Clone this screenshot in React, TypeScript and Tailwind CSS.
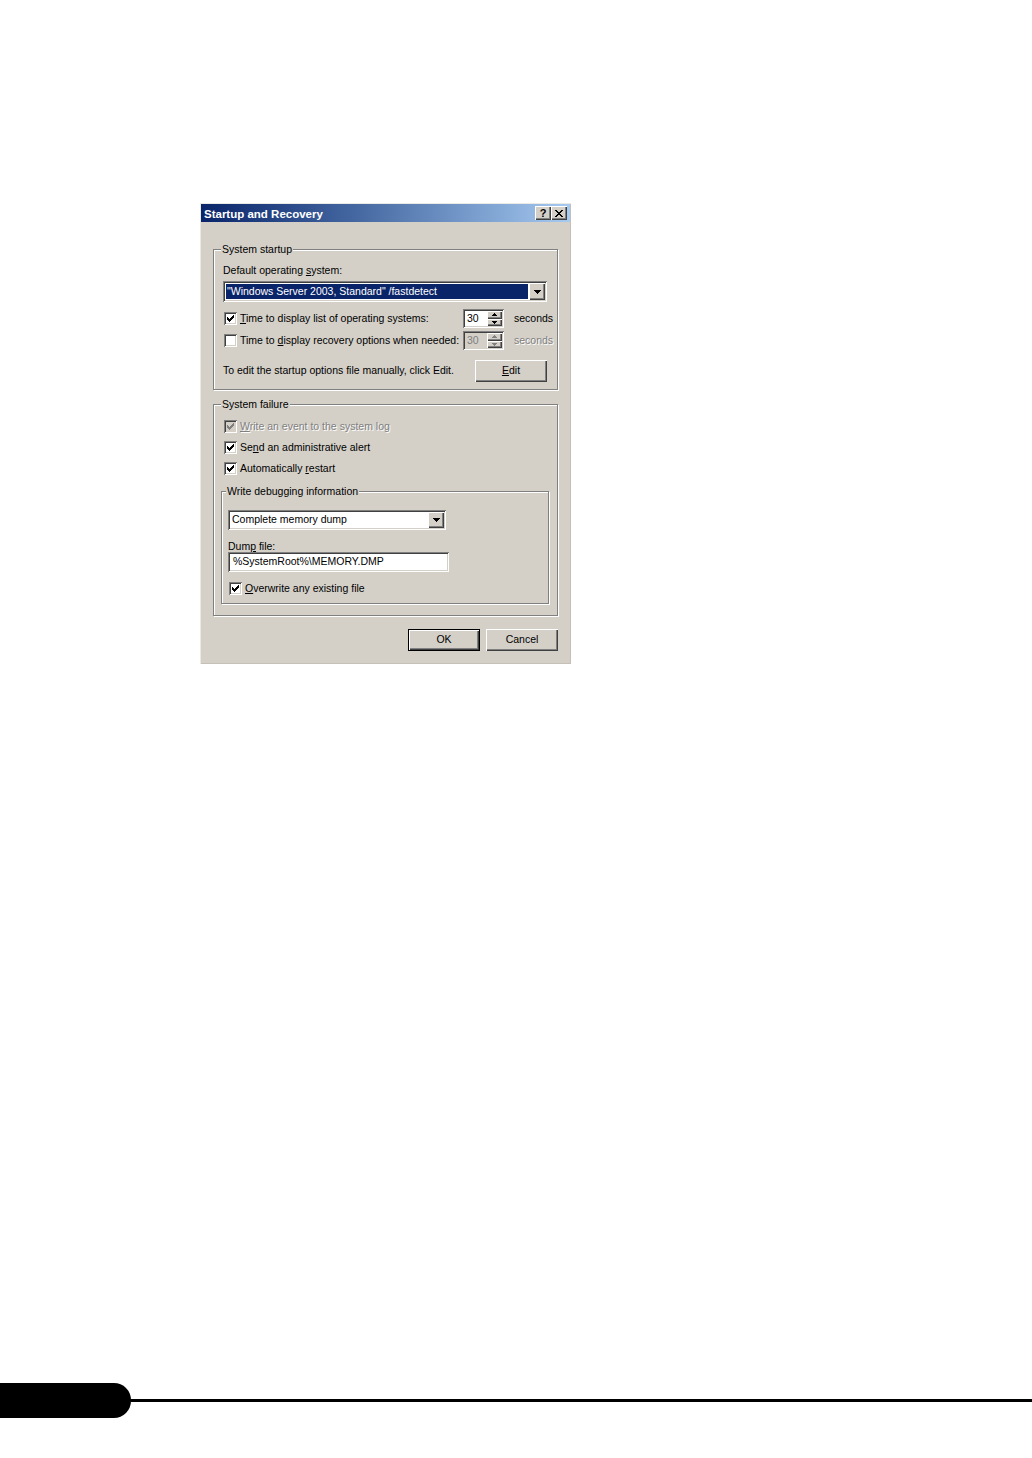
import React from "react";

const raised =
  "bg-[#d4d0c8] shadow-[inset_1px_1px_0_#ffffff,inset_-1px_-1px_0_#404040,inset_-2px_-2px_0_#808080]";
const sunken =
  "shadow-[inset_1px_1px_0_#808080,inset_-1px_-1px_0_#ffffff,inset_2px_2px_0_#404040,inset_-2px_-2px_0_#d4d0c8]";
const etched = "border border-[#808080] shadow-[inset_1px_1px_0_#ffffff,1px_1px_0_#ffffff]";
const embossed = "text-[#808080] [text-shadow:1px_1px_0_#ffffff]";

function Check({ checked, disabled }: { checked?: boolean; disabled?: boolean }) {
  return (
    <span
      className={`flex h-[13px] w-[13px] shrink-0 items-center justify-center ${disabled ? "bg-[#d4d0c8]" : "bg-white"} ${sunken}`}
    >
      {checked ? (
        <svg width="7" height="7" viewBox="0 0 7 7" shapeRendering="crispEdges">
          <path
            d="M6 0h1v1H6z M5 1h2v1H5z M0 2h1v1H0z M4 2h3v1H4z M0 3h2v1H0z M3 3h3v1H3z M0 4h5v1H0z M1 5h3v1H1z M2 6h1v1H2z"
            fill={disabled ? "#808080" : "#000000"}
          />
        </svg>
      ) : null}
    </span>
  );
}

function DownArrow() {
  return (
    <svg width="7" height="4" viewBox="0 0 7 4" shapeRendering="crispEdges">
      <path d="M0 0h7v1H0z M1 1h5v1H1z M2 2h3v1H2z M3 3h1v1H3z" fill="#000000" />
    </svg>
  );
}

function Spin({ disabled }: { disabled?: boolean }) {
  const fill = disabled ? "#808080" : "#000000";
  return (
    <div className={`flex h-[19px] w-[41px] shrink-0 p-[2px] ${disabled ? "bg-[#d4d0c8]" : "bg-white"} ${sunken}`}>
      <div className={`flex-1 pl-[2px] leading-[15px] ${disabled ? "text-[#808080]" : ""}`}>30</div>
      <div className="flex w-[15px] flex-col">
        <div className={`flex flex-1 items-center justify-center ${raised}`}>
          <svg width="5" height="3" viewBox="0 0 5 3" shapeRendering="crispEdges">
            <path d="M2 0h1v1H2z M1 1h3v1H1z M0 2h5v1H0z" fill={fill} />
          </svg>
        </div>
        <div className={`flex flex-1 items-center justify-center ${raised}`}>
          <svg width="5" height="3" viewBox="0 0 5 3" shapeRendering="crispEdges">
            <path d="M0 0h5v1H0z M1 1h3v1H1z M2 2h1v1H2z" fill={fill} />
          </svg>
        </div>
      </div>
    </div>
  );
}

function Legend({ children }: { children: React.ReactNode }) {
  return <div className="-ml-[2px] -mt-[7px] w-fit bg-[#d4d0c8] px-[1px] leading-[13px]">{children}</div>;
}

function CheckRow({
  checked,
  disabled,
  children,
}: {
  checked?: boolean;
  disabled?: boolean;
  children: React.ReactNode;
}) {
  return (
    <div className="flex h-[17px] items-center whitespace-nowrap">
      <span className="ml-[1px]">
        <Check checked={checked} disabled={disabled} />
      </span>
      <span className={`ml-[3px] ${disabled ? embossed : ""}`}>{children}</span>
    </div>
  );
}

export default function App() {
  return (
    <div className="flex h-[1458px] w-[1032px] flex-col bg-white font-['Liberation_Sans',Arial,sans-serif] text-[10.5px] text-black">
      <div className="ml-[200px] mt-[203px] flex h-[461px] w-[371px] flex-col bg-[#d4d0c8] px-[1px] pt-[1px] shadow-[inset_1px_1px_0_#ebe9e4,inset_-1px_-1px_0_#c4c0b8]">
        {/* title bar */}
        <div className="flex h-[18px] items-center justify-between bg-linear-to-r from-[#0a246a] to-[#a6caf0] pl-[3px] pr-[3px]">
          <div className="pt-[1px] text-[11.5px] font-bold leading-[14px] text-white">Startup and Recovery</div>
          <div className="flex">
            <div className={`flex h-[14px] w-[16px] items-center justify-center text-[11px] font-bold leading-[14px] ${raised}`}>
              ?
            </div>
            <div className={`flex h-[14px] w-[16px] items-center justify-center ${raised}`}>
              <svg width="8" height="7" viewBox="0 0 8 7" shapeRendering="crispEdges">
                <path
                  d="M0 0h2v1H0z M6 0h2v1H6z M1 1h2v1H1z M5 1h2v1H5z M2 2h4v1H2z M3 3h2v1H3z M2 4h4v1H2z M1 5h2v1H1z M5 5h2v1H5z M0 6h2v1H0z M6 6h2v1H6z"
                  fill="#000000"
                />
              </svg>
            </div>
          </div>
        </div>

        <div className="flex flex-col px-[12px]">
          {/* System startup */}
          <div className={`mt-[27px] h-[141px] pl-[9px] pr-[10px] ${etched}`}>
            <Legend>System startup</Legend>
            <div className="mt-[8px] leading-[13px]">
              Default operating <span className="underline">s</span>ystem:
            </div>
            <div className={`mt-[4px] flex h-[21px] bg-white p-[2px] ${sunken}`}>
              <div className="m-[1px] flex flex-1 items-center bg-[#0a246a] pl-[1px] text-white">
                "Windows Server 2003, Standard" /fastdetect
              </div>
              <div className={`flex w-[16px] items-center justify-center ${raised}`}>
                <DownArrow />
              </div>
            </div>
            <div className="mt-[7px] flex h-[19px] items-center whitespace-nowrap">
              <div className="flex w-[240px] shrink-0 items-center">
                <span className="ml-[1px]">
                  <Check checked />
                </span>
                <span className="ml-[3px]">
                  <span className="underline">T</span>ime to display list of operating systems:
                </span>
              </div>
              <Spin />
              <span className="ml-[10px] shrink-0">seconds</span>
            </div>
            <div className="mt-[3px] flex h-[19px] items-center whitespace-nowrap">
              <div className="flex w-[240px] shrink-0 items-center">
                <span className="ml-[1px]">
                  <Check />
                </span>
                <span className="ml-[3px]">
                  Time to <span className="underline">d</span>isplay recovery options when needed:
                </span>
              </div>
              <Spin disabled />
              <span className={`ml-[10px] shrink-0 ${embossed}`}>seconds</span>
            </div>
            <div className="mt-[10px] flex items-center justify-between whitespace-nowrap">
              <span>To edit the startup options file manually, click Edit.</span>
              <div className={`flex h-[22px] w-[72px] shrink-0 items-center justify-center ${raised}`}>
                <span>
                  <span className="underline">E</span>dit
                </span>
              </div>
            </div>
          </div>

          {/* System failure */}
          <div className={`mt-[14px] h-[212px] pl-[9px] pr-[8px] ${etched}`}>
            <Legend>System failure</Legend>
            <div className="mt-[7px] flex flex-col gap-[4px]">
              <CheckRow checked disabled>
                <span className="underline">W</span>rite an event to the system log
              </CheckRow>
              <CheckRow checked>
                Se<span className="underline">n</span>d an administrative alert
              </CheckRow>
              <CheckRow checked>
                Automatically <span className="underline">r</span>estart
              </CheckRow>
            </div>

            <div className={`-ml-[2px] mt-[14px] h-[113px] pl-[6px] ${etched}`}>
              <Legend>Write debugging information</Legend>
              <div className={`mt-[12px] flex h-[20px] w-[218px] bg-white p-[2px] ${sunken}`}>
                <div className="flex flex-1 items-center pl-[2px]">Complete memory dump</div>
                <div className={`flex w-[16px] items-center justify-center ${raised}`}>
                  <DownArrow />
                </div>
              </div>
              <div className="mt-[10px] leading-[12px]">
                Dum<span className="underline">p</span> file:
              </div>
              <div className={`flex h-[20px] w-[221px] items-center bg-white pl-[5px] ${sunken}`}>
                %SystemRoot%\MEMORY.DMP
              </div>
              <div className="mt-[8px]">
                <CheckRow checked>
                  <span className="underline">O</span>verwrite any existing file
                </CheckRow>
              </div>
            </div>
          </div>

          {/* buttons */}
          <div className="mt-[13px] flex justify-end gap-[6px]">
            <div className="flex h-[22px] w-[72px] border border-black">
              <div className={`flex flex-1 items-center justify-center ${raised}`}>OK</div>
            </div>
            <div className={`flex h-[22px] w-[72px] items-center justify-center ${raised}`}>Cancel</div>
          </div>
        </div>
      </div>

      {/* page footer */}
      <div className="mb-[40px] mt-auto flex items-center">
        <div className="h-[35px] w-[131px] rounded-r-[17px] bg-black" />
        <div className="h-[3px] flex-1 bg-black" />
      </div>
    </div>
  );
}
